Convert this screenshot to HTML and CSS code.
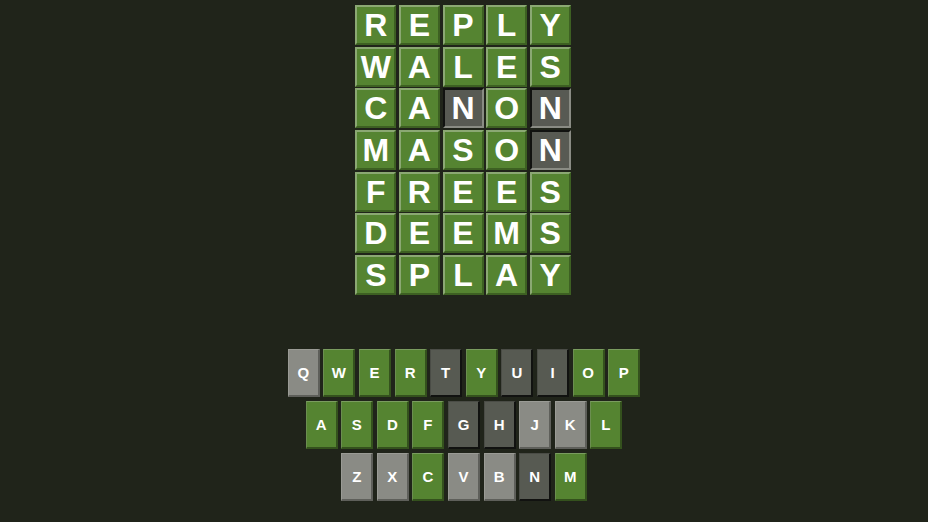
FILE: index.html
```html
<!DOCTYPE html>
<html>
<head>
<meta charset="utf-8">
<link rel="stylesheet" href="styles.css">
</head>
<body>
<div class="app">
  <div class="board">
    <div class="tile g">R</div><div class="tile g">E</div><div class="tile g">P</div><div class="tile g">L</div><div class="tile g">Y</div>
    <div class="tile g">W</div><div class="tile g">A</div><div class="tile g">L</div><div class="tile g">E</div><div class="tile g">S</div>
    <div class="tile g">C</div><div class="tile g">A</div><div class="tile d">N</div><div class="tile g">O</div><div class="tile d">N</div>
    <div class="tile g">M</div><div class="tile g">A</div><div class="tile g">S</div><div class="tile g">O</div><div class="tile d">N</div>
    <div class="tile g">F</div><div class="tile g">R</div><div class="tile g">E</div><div class="tile g">E</div><div class="tile g">S</div>
    <div class="tile g">D</div><div class="tile g">E</div><div class="tile g">E</div><div class="tile g">M</div><div class="tile g">S</div>
    <div class="tile g">S</div><div class="tile g">P</div><div class="tile g">L</div><div class="tile g">A</div><div class="tile g">Y</div>
  </div>
  <div class="keyboard">
    <div class="krow">
      <div class="key l">Q</div><div class="key g">W</div><div class="key g">E</div><div class="key g">R</div><div class="key d">T</div><div class="key g">Y</div><div class="key d">U</div><div class="key d">I</div><div class="key g">O</div><div class="key g">P</div>
    </div>
    <div class="krow">
      <div class="key g">A</div><div class="key g">S</div><div class="key g">D</div><div class="key g">F</div><div class="key d">G</div><div class="key d">H</div><div class="key l">J</div><div class="key l">K</div><div class="key g">L</div>
    </div>
    <div class="krow">
      <div class="key l">Z</div><div class="key l">X</div><div class="key g">C</div><div class="key l">V</div><div class="key l">B</div><div class="key d">N</div><div class="key g">M</div>
    </div>
  </div>
</div>
</body>
</html>
```
FILE: styles.css
```css
html, body {
  margin: 0;
  padding: 0;
  background: #20241a;
  height: 100%;
}
body {
  font-family: "Liberation Sans", Arial, sans-serif;
  color: #fff;
}
.app {
  display: flex;
  flex-direction: column;
  align-items: center;
  padding-top: 5px;
}
.board {
  display: grid;
  grid-template-columns: repeat(5, 41px);
  grid-auto-rows: 40px;
  column-gap: 2.6px;
  row-gap: 1.67px;
  margin-right: 2px;
}
.tile {
  box-sizing: border-box;
  display: flex;
  align-items: center;
  justify-content: center;
  font-weight: bold;
  font-size: 32px;
  line-height: 1;
  border: 2px solid;
}
.tile.g {
  background: #558431;
  border-color: #8ba873 #3d6022 #3d6022 #8ba873;
}
.tile.d {
  background: #585a53;
  border-color: #111210 #8a8c84 #8a8c84 #111210;
}
.keyboard {
  margin-top: 54px;
  display: flex;
  flex-direction: column;
  align-items: center;
  row-gap: 4px;
}
.krow {
  display: flex;
  column-gap: 3.6px;
}
.key {
  box-sizing: border-box;
  width: 32px;
  height: 48px;
  display: flex;
  align-items: center;
  justify-content: center;
  font-weight: bold;
  font-size: 15px;
  border-style: solid;
  border-width: 1px 2px 2px 1px;
}
.key.g {
  background: #558431;
  border-color: #7a9c5f #34511d #34511d #6b8e50;
}
.key.d {
  background: #575a52;
  border-color: #4a4c46 #111210 #111210 #4a4c46;
}
.key.l {
  background: #8a8b85;
  border-color: #9a9b95 #5e5f5a #5e5f5a #9a9b95;
}
```
